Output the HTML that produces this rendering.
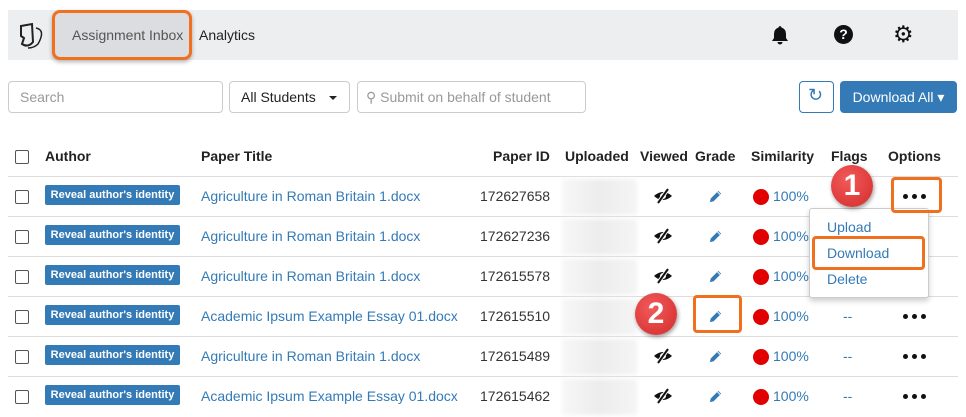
<!DOCTYPE html><html><head><style>
body{margin:0;width:966px;height:416px;background:#fff;font-family:"Liberation Sans",Arial,sans-serif;position:relative;overflow:hidden;font-size:14px;color:#333}
.a{position:absolute}
.hdr{left:8px;top:10px;width:950px;height:50px;background:#eceef0}
.inp{border:1px solid #ccc;border-radius:4px;height:32px;box-sizing:border-box;background:#fff}
.th{top:148px;font-weight:bold;font-size:14px;color:#222}
.line{left:8px;width:950px;height:1px;background:#ddd}
.cb{width:12px;height:12px;border:1px solid #555;border-radius:2px;background:#fff}
.btn{background:#337ab7;color:#fff;font-size:11px;font-weight:bold;border-radius:2px;left:45px;width:135px;height:20px;line-height:20px;text-align:center;white-space:nowrap;top:8px}
.lnk{color:#337ab7}
.blur{left:562px;width:75px;height:36px;background:linear-gradient(90deg,#f7f7f7,#ececec,#f5f5f5);filter:blur(2px)}
.dot{width:16px;height:16px;border-radius:50%;background:#e00000}
.badge{width:42px;height:42px;border-radius:50%;background:radial-gradient(circle at 40% 35%,#f25a5a,#d32b2b);color:#fff;font-weight:bold;font-size:30px;text-align:center;line-height:42px;box-shadow:1px 2px 4px rgba(0,0,0,.4)}
.or{border:3px solid #f07020;border-radius:4px;box-sizing:border-box}
.r{position:absolute;left:0;width:966px;height:40px}
.dots{left:903px;top:17px;width:36px;height:6px}
.dots i{float:left;width:5px;height:5px;border-radius:50%;background:#111;margin-right:4px}
</style></head><body>
<svg width="0" height="0" style="position:absolute"><defs>
<symbol id="eye" viewBox="0 0 20 16"><path d="M1 8 Q10 0 19 8 Q10 16 1 8Z" fill="#111"/><circle cx="10" cy="8" r="3" fill="#fff"/><path d="M15 1 L5 15" stroke="#fff" stroke-width="4"/><path d="M15 1 L5 15" stroke="#111" stroke-width="2"/></symbol>
<symbol id="pen" viewBox="0 0 16 16"><path d="M11 2 L14 5 L6 13 L2 14 L3 10 Z" fill="#337ab7"/><path d="M10 3 L13 6" stroke="#fff" stroke-width="1"/></symbol>
</defs></svg>
<div class="a hdr"></div>
<svg class="a" style="left:16px;top:20px" width="32" height="32" viewBox="0 0 32 32"><path d="M5 6 L16 4 L17 22 Q12 28 6 24 L8 18 L5 16 Z" fill="none" stroke="#222" stroke-width="2"/><path d="M20 8 Q30 10 22 24 Q18 28 12 28" fill="none" stroke="#222" stroke-width="1.5"/></svg>
<div class="a" style="left:52px;top:10px;width:140px;height:50px;background:#dcdde0;border:3px solid #f07020;border-radius:8px;box-sizing:border-box;box-shadow:0 2px 4px rgba(0,0,0,.3)"></div>
<div class="a" style="left:72px;top:27px;color:#555">Assignment Inbox</div>
<div class="a" style="left:199px;top:27px;color:#222">Analytics</div>
<svg class="a" style="left:770px;top:25px" width="20" height="20" viewBox="0 0 20 20"><path d="M10 1a2 2 0 0 1 1.5 1.5Q16 4 16 9v4l2 3H2l2-3V9q0-5 4.5-6.5A2 2 0 0 1 10 1z M7.5 17h5a2.5 2.5 0 0 1-5 0z" fill="#111"/></svg>
<div class="a" style="left:834px;top:25px;width:19px;height:19px;border-radius:50%;background:#111;color:#fff;font-weight:bold;font-size:14px;text-align:center;line-height:19px">?</div>
<div class="a" style="left:893px;top:21px;font-size:23px;color:#111">⚙</div>
<div class="a inp" style="left:8px;top:81px;width:215px"></div><div class="a" style="left:20px;top:89px;color:#999">Search</div>
<div class="a inp" style="left:229px;top:81px;width:121px"></div><div class="a" style="left:241px;top:89px;color:#222">All Students</div>
<div class="a" style="left:329px;top:96px;border-left:4px solid transparent;border-right:4px solid transparent;border-top:4px solid #222"></div>
<div class="a inp" style="left:357px;top:81px;width:229px"></div><div class="a" style="left:366px;top:89px;color:#999;font-size:14px">⚲ Submit on behalf of student</div>
<div class="a inp" style="left:799px;top:81px;width:35px;border-color:#337ab7"></div><div class="a" style="left:808px;top:85px;color:#337ab7;font-size:18px">↻</div>
<div class="a" style="left:840px;top:81px;width:117px;height:32px;background:#337ab7;border-radius:4px;color:#fff;line-height:32px;text-align:center">Download All ▾</div>
<div class="a cb" style="left:15px;top:150px"></div>
<div class="a th" style="left:45px">Author</div><div class="a th" style="left:201px">Paper Title</div><div class="a th" style="left:493px">Paper ID</div><div class="a th" style="left:565px">Uploaded</div><div class="a th" style="left:640px">Viewed</div><div class="a th" style="left:695px">Grade</div><div class="a th" style="left:751px">Similarity</div><div class="a th" style="left:831px">Flags</div><div class="a th" style="left:888px">Options</div>
<div class="a line" style="top:176px"></div>

<div class="r" style="top:177px"><div class="a cb" style="left:15px;top:13px"></div><div class="a btn">Reveal author's identity</div><div class="a lnk" style="left:201px;top:11px">Agriculture in Roman Britain 1.docx</div><div class="a" style="left:480px;top:11px">172627658</div><div class="a blur" style="top:2px"></div><svg class="a" style="left:653px;top:11px" width="20" height="16"><use href="#eye"/></svg><svg class="a" style="left:708px;top:12px" width="15" height="15"><use href="#pen"/></svg><div class="a dot" style="left:753px;top:12px"></div><div class="a lnk" style="left:773px;top:11px">100%</div><div class="a dots"><i></i><i></i><i></i></div><div class="a line" style="top:39px"></div></div>
<div class="r" style="top:217px"><div class="a cb" style="left:15px;top:13px"></div><div class="a btn">Reveal author's identity</div><div class="a lnk" style="left:201px;top:11px">Agriculture in Roman Britain 1.docx</div><div class="a" style="left:480px;top:11px">172627236</div><div class="a blur" style="top:2px"></div><svg class="a" style="left:653px;top:11px" width="20" height="16"><use href="#eye"/></svg><svg class="a" style="left:708px;top:12px" width="15" height="15"><use href="#pen"/></svg><div class="a dot" style="left:753px;top:12px"></div><div class="a lnk" style="left:773px;top:11px">100%</div><div class="a line" style="top:39px"></div></div>
<div class="r" style="top:257px"><div class="a cb" style="left:15px;top:13px"></div><div class="a btn">Reveal author's identity</div><div class="a lnk" style="left:201px;top:11px">Agriculture in Roman Britain 1.docx</div><div class="a" style="left:480px;top:11px">172615578</div><div class="a blur" style="top:2px"></div><svg class="a" style="left:653px;top:11px" width="20" height="16"><use href="#eye"/></svg><svg class="a" style="left:708px;top:12px" width="15" height="15"><use href="#pen"/></svg><div class="a dot" style="left:753px;top:12px"></div><div class="a lnk" style="left:773px;top:11px">100%</div><div class="a line" style="top:39px"></div></div>
<div class="r" style="top:297px"><div class="a cb" style="left:15px;top:13px"></div><div class="a btn">Reveal author's identity</div><div class="a lnk" style="left:201px;top:11px">Academic Ipsum Example Essay 01.docx</div><div class="a" style="left:480px;top:11px">172615510</div><div class="a blur" style="top:2px"></div><svg class="a" style="left:708px;top:12px" width="15" height="15"><use href="#pen"/></svg><div class="a dot" style="left:753px;top:12px"></div><div class="a lnk" style="left:773px;top:11px">100%</div><div class="a lnk" style="left:843px;top:11px">--</div><div class="a dots"><i></i><i></i><i></i></div><div class="a line" style="top:39px"></div></div>
<div class="r" style="top:337px"><div class="a cb" style="left:15px;top:13px"></div><div class="a btn">Reveal author's identity</div><div class="a lnk" style="left:201px;top:11px">Agriculture in Roman Britain 1.docx</div><div class="a" style="left:480px;top:11px">172615489</div><div class="a blur" style="top:2px"></div><svg class="a" style="left:653px;top:11px" width="20" height="16"><use href="#eye"/></svg><svg class="a" style="left:708px;top:12px" width="15" height="15"><use href="#pen"/></svg><div class="a dot" style="left:753px;top:12px"></div><div class="a lnk" style="left:773px;top:11px">100%</div><div class="a lnk" style="left:843px;top:11px">--</div><div class="a dots"><i></i><i></i><i></i></div><div class="a line" style="top:39px"></div></div>
<div class="r" style="top:377px"><div class="a cb" style="left:15px;top:13px"></div><div class="a btn">Reveal author's identity</div><div class="a lnk" style="left:201px;top:11px">Academic Ipsum Example Essay 01.docx</div><div class="a" style="left:480px;top:11px">172615462</div><div class="a blur" style="top:2px"></div><svg class="a" style="left:653px;top:11px" width="20" height="16"><use href="#eye"/></svg><svg class="a" style="left:708px;top:12px" width="15" height="15"><use href="#pen"/></svg><div class="a dot" style="left:753px;top:12px"></div><div class="a lnk" style="left:773px;top:11px">100%</div><div class="a lnk" style="left:843px;top:11px">--</div><div class="a dots"><i></i><i></i><i></i></div></div>

<div class="a" style="left:809px;top:208px;width:118px;height:88px;background:#fff;border:1px solid #ccc;border-radius:3px;box-shadow:0 3px 6px rgba(0,0,0,.2)"></div>
<div class="a lnk" style="left:827px;top:219px">Upload</div>
<div class="a lnk" style="left:827px;top:245px">Download</div>
<div class="a lnk" style="left:827px;top:271px">Delete</div>
<div class="a or" style="left:812px;top:236px;width:113px;height:34px"></div>
<div class="a or" style="left:891px;top:177px;width:51px;height:36px"></div>
<div class="a or" style="left:693px;top:295px;width:49px;height:38px"></div>
<div class="a badge" style="left:831px;top:165px">1</div>
<div class="a badge" style="left:635px;top:293px">2</div>
</body></html>
